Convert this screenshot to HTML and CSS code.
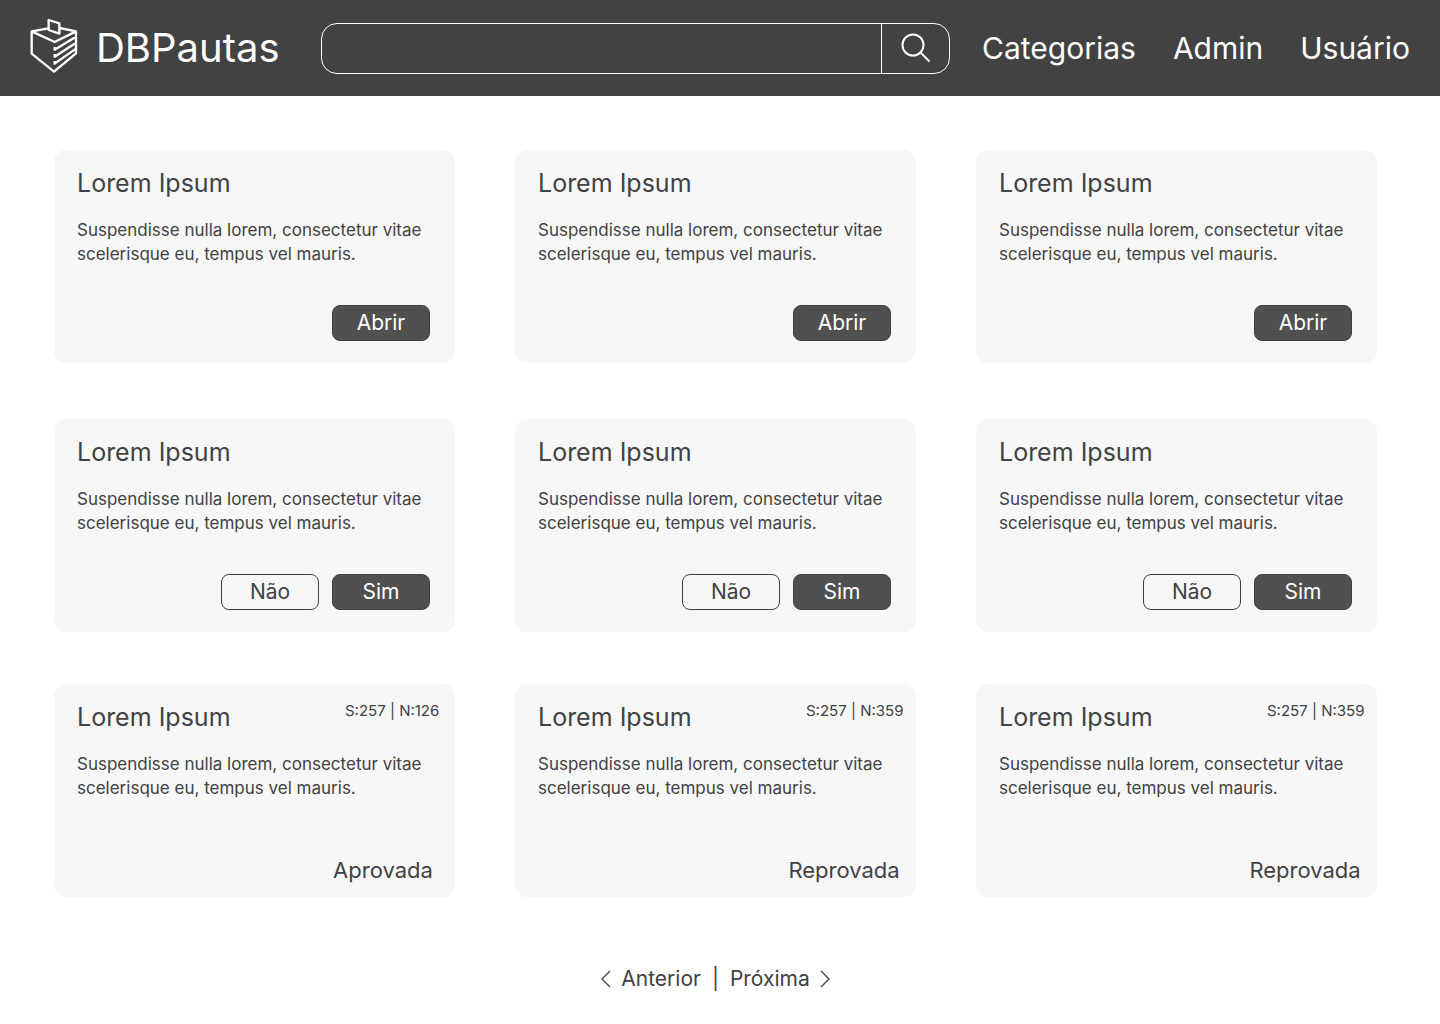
FILE: index.html
```html
<!DOCTYPE html>
<html lang="pt-BR">
<head>
  <meta charset="utf-8">
  <meta name="viewport" content="width=device-width, initial-scale=1">
  <title>DBPautas</title>
  <link rel="stylesheet" href="styles.css">
</head>
<body>
  <header class="topbar">
    <a class="brand" href="#">
      <svg class="brand-icon" viewBox="30 24 144 180" aria-hidden="true">
        <path d="M85 55 35 64V131L102 185L168 130V64L119 54M35 64 104 96 168 64M86 30 118 40V71L86 60ZM104 111V119L168 80M104 132V140L168 98M104 153V161L168 116"/>
      </svg>
      <span class="brand-name">DBPautas</span>
    </a>
    <form class="search" role="search">
      <input class="search-input" type="search" aria-label="Buscar pautas">
      <button class="search-button" type="button" aria-label="Buscar">
        <svg class="search-icon" viewBox="0 0 30 30" aria-hidden="true">
          <circle cx="12" cy="12" r="10.5"/>
          <path d="M19.5 19.5 28 28"/>
        </svg>
      </button>
    </form>
    <nav class="menu" aria-label="Principal">
      <a href="#">Categorias</a>
      <a href="#">Admin</a>
      <a href="#">Usuário</a>
    </nav>
  </header>

  <main class="content">
    <section class="cards" aria-label="Pautas">
      <article class="card">
        <h2 class="card-title">Lorem Ipsum</h2>
        <p class="card-text">Suspendisse nulla lorem, consectetur vitae scelerisque eu, tempus vel mauris.</p>
        <div class="actions"><button class="button button-solid" type="button">Abrir</button></div>
      </article>
      <article class="card">
        <h2 class="card-title">Lorem Ipsum</h2>
        <p class="card-text">Suspendisse nulla lorem, consectetur vitae scelerisque eu, tempus vel mauris.</p>
        <div class="actions"><button class="button button-solid" type="button">Abrir</button></div>
      </article>
      <article class="card">
        <h2 class="card-title">Lorem Ipsum</h2>
        <p class="card-text">Suspendisse nulla lorem, consectetur vitae scelerisque eu, tempus vel mauris.</p>
        <div class="actions"><button class="button button-solid" type="button">Abrir</button></div>
      </article>
    </section>

    <section class="cards cards-voting" aria-label="Em votação">
      <article class="card">
        <h2 class="card-title">Lorem Ipsum</h2>
        <p class="card-text">Suspendisse nulla lorem, consectetur vitae scelerisque eu, tempus vel mauris.</p>
        <div class="actions">
          <button class="button" type="button">Não</button>
          <button class="button button-solid" type="button">Sim</button>
        </div>
      </article>
      <article class="card">
        <h2 class="card-title">Lorem Ipsum</h2>
        <p class="card-text">Suspendisse nulla lorem, consectetur vitae scelerisque eu, tempus vel mauris.</p>
        <div class="actions">
          <button class="button" type="button">Não</button>
          <button class="button button-solid" type="button">Sim</button>
        </div>
      </article>
      <article class="card">
        <h2 class="card-title">Lorem Ipsum</h2>
        <p class="card-text">Suspendisse nulla lorem, consectetur vitae scelerisque eu, tempus vel mauris.</p>
        <div class="actions">
          <button class="button" type="button">Não</button>
          <button class="button button-solid" type="button">Sim</button>
        </div>
      </article>
    </section>

    <section class="cards" aria-label="Encerradas">
      <article class="card card-closed">
        <div class="card-head">
          <h2 class="card-title">Lorem Ipsum</h2>
          <span class="tally">S:257 | N:126</span>
        </div>
        <p class="card-text">Suspendisse nulla lorem, consectetur vitae scelerisque eu, tempus vel mauris.</p>
        <p class="status">Aprovada</p>
      </article>
      <article class="card card-closed">
        <div class="card-head">
          <h2 class="card-title">Lorem Ipsum</h2>
          <span class="tally">S:257 | N:359</span>
        </div>
        <p class="card-text">Suspendisse nulla lorem, consectetur vitae scelerisque eu, tempus vel mauris.</p>
        <p class="status">Reprovada</p>
      </article>
      <article class="card card-closed">
        <div class="card-head">
          <h2 class="card-title">Lorem Ipsum</h2>
          <span class="tally">S:257 | N:359</span>
        </div>
        <p class="card-text">Suspendisse nulla lorem, consectetur vitae scelerisque eu, tempus vel mauris.</p>
        <p class="status">Reprovada</p>
      </article>
    </section>

    <nav class="pagination" aria-label="Paginação">
      <a class="page-link" href="#">
        <svg class="chevron" viewBox="0 0 10 18" aria-hidden="true"><path d="M9 1 1 9 9 17"/></svg>
        Anterior
      </a>
      <span>|</span>
      <a class="page-link" href="#">
        Próxima
        <svg class="chevron" viewBox="0 0 10 18" aria-hidden="true"><path d="M1 1 9 9 1 17"/></svg>
      </a>
    </nav>
  </main>
</body>
</html>
```

FILE: styles.css
```css
* {
  box-sizing: border-box;
}

body {
  margin: 0;
  background: #fff;
  color: #424242;
  font-family: Inter, sans-serif;
  font-size: 17px;
  line-height: 24px;
}

a {
  color: inherit;
  text-decoration: none;
}

svg {
  display: block;
  flex: none;
  fill: none;
  stroke: currentColor;
}

.topbar {
  display: flex;
  align-items: center;
  gap: 32px;
  min-height: 96px;
  padding: 0 30px;
  background: #424242;
  color: #fff;
}

.brand {
  display: flex;
  flex: 0 0 259px;
  align-items: center;
  gap: 18px;
}

.brand-icon {
  width: 48px;
  height: 60px;
  stroke-width: 7;
  stroke-linejoin: round;
}

.brand-name {
  font-size: 40px;
  line-height: 60px;
}

.search {
  display: flex;
  flex: 1;
  min-width: 0;
  height: 51px;
  border: 1px solid #fff;
  border-radius: 16px;
}

.search-input {
  flex: 1;
  min-width: 0;
  padding: 0 16px;
  border: 0;
  background: transparent;
  color: inherit;
  font: inherit;
  outline: none;
}

.search-button {
  display: grid;
  flex: 0 0 68px;
  place-items: center;
  padding: 0;
  border: 0;
  border-left: 1px solid #fff;
  background: transparent;
  color: inherit;
}

.search-icon {
  width: 30px;
  height: 30px;
  stroke-width: 2;
  stroke-linecap: round;
}

.menu {
  display: flex;
  flex: 0 0 428px;
  justify-content: space-between;
  font-size: 30px;
  line-height: 42px;
}

.content {
  padding: 54px 63px 30px 54px;
}

.cards {
  display: grid;
  grid-template-columns: repeat(3, 1fr);
  gap: 60px;
}

.cards-voting {
  margin: 56px 0 52px;
}

.card {
  display: flex;
  flex-direction: column;
  min-height: 213px;
  padding: 15px 25px 22px 23px;
  border-radius: 12px;
  background: #f7f7f7;
}

.card-title {
  margin: 0;
  font-size: 25px;
  font-weight: 400;
  line-height: 36px;
}

.card-text {
  margin: 17px 0 0;
}

.actions {
  display: flex;
  justify-content: flex-end;
  gap: 13px;
  margin-top: auto;
}

.button {
  width: 98px;
  height: 36px;
  padding: 0;
  border: 1px solid #424242;
  border-radius: 8px;
  background: transparent;
  color: #424242;
  font: inherit;
  font-size: 21px;
}

.button-solid {
  background: #505050;
  color: #fff;
}

.card-closed {
  padding-right: 12px;
  padding-bottom: 12px;
}

.card-head {
  display: flex;
  justify-content: space-between;
}

.tally {
  width: 98px;
  font-size: 15px;
  white-space: nowrap;
}

.card-closed .card-text {
  padding-right: 12px;
}

.status {
  align-self: flex-end;
  width: 120px;
  margin: auto 0 0;
  font-size: 22px;
  line-height: 30px;
  text-align: center;
}

.pagination {
  display: flex;
  justify-content: center;
  gap: 11px;
  margin-top: 67px;
  font-size: 21px;
  line-height: 30px;
}

.page-link {
  display: flex;
  align-items: center;
  gap: 10px;
}

.chevron {
  width: 10px;
  height: 18px;
  stroke-width: 1.3;
}
```
